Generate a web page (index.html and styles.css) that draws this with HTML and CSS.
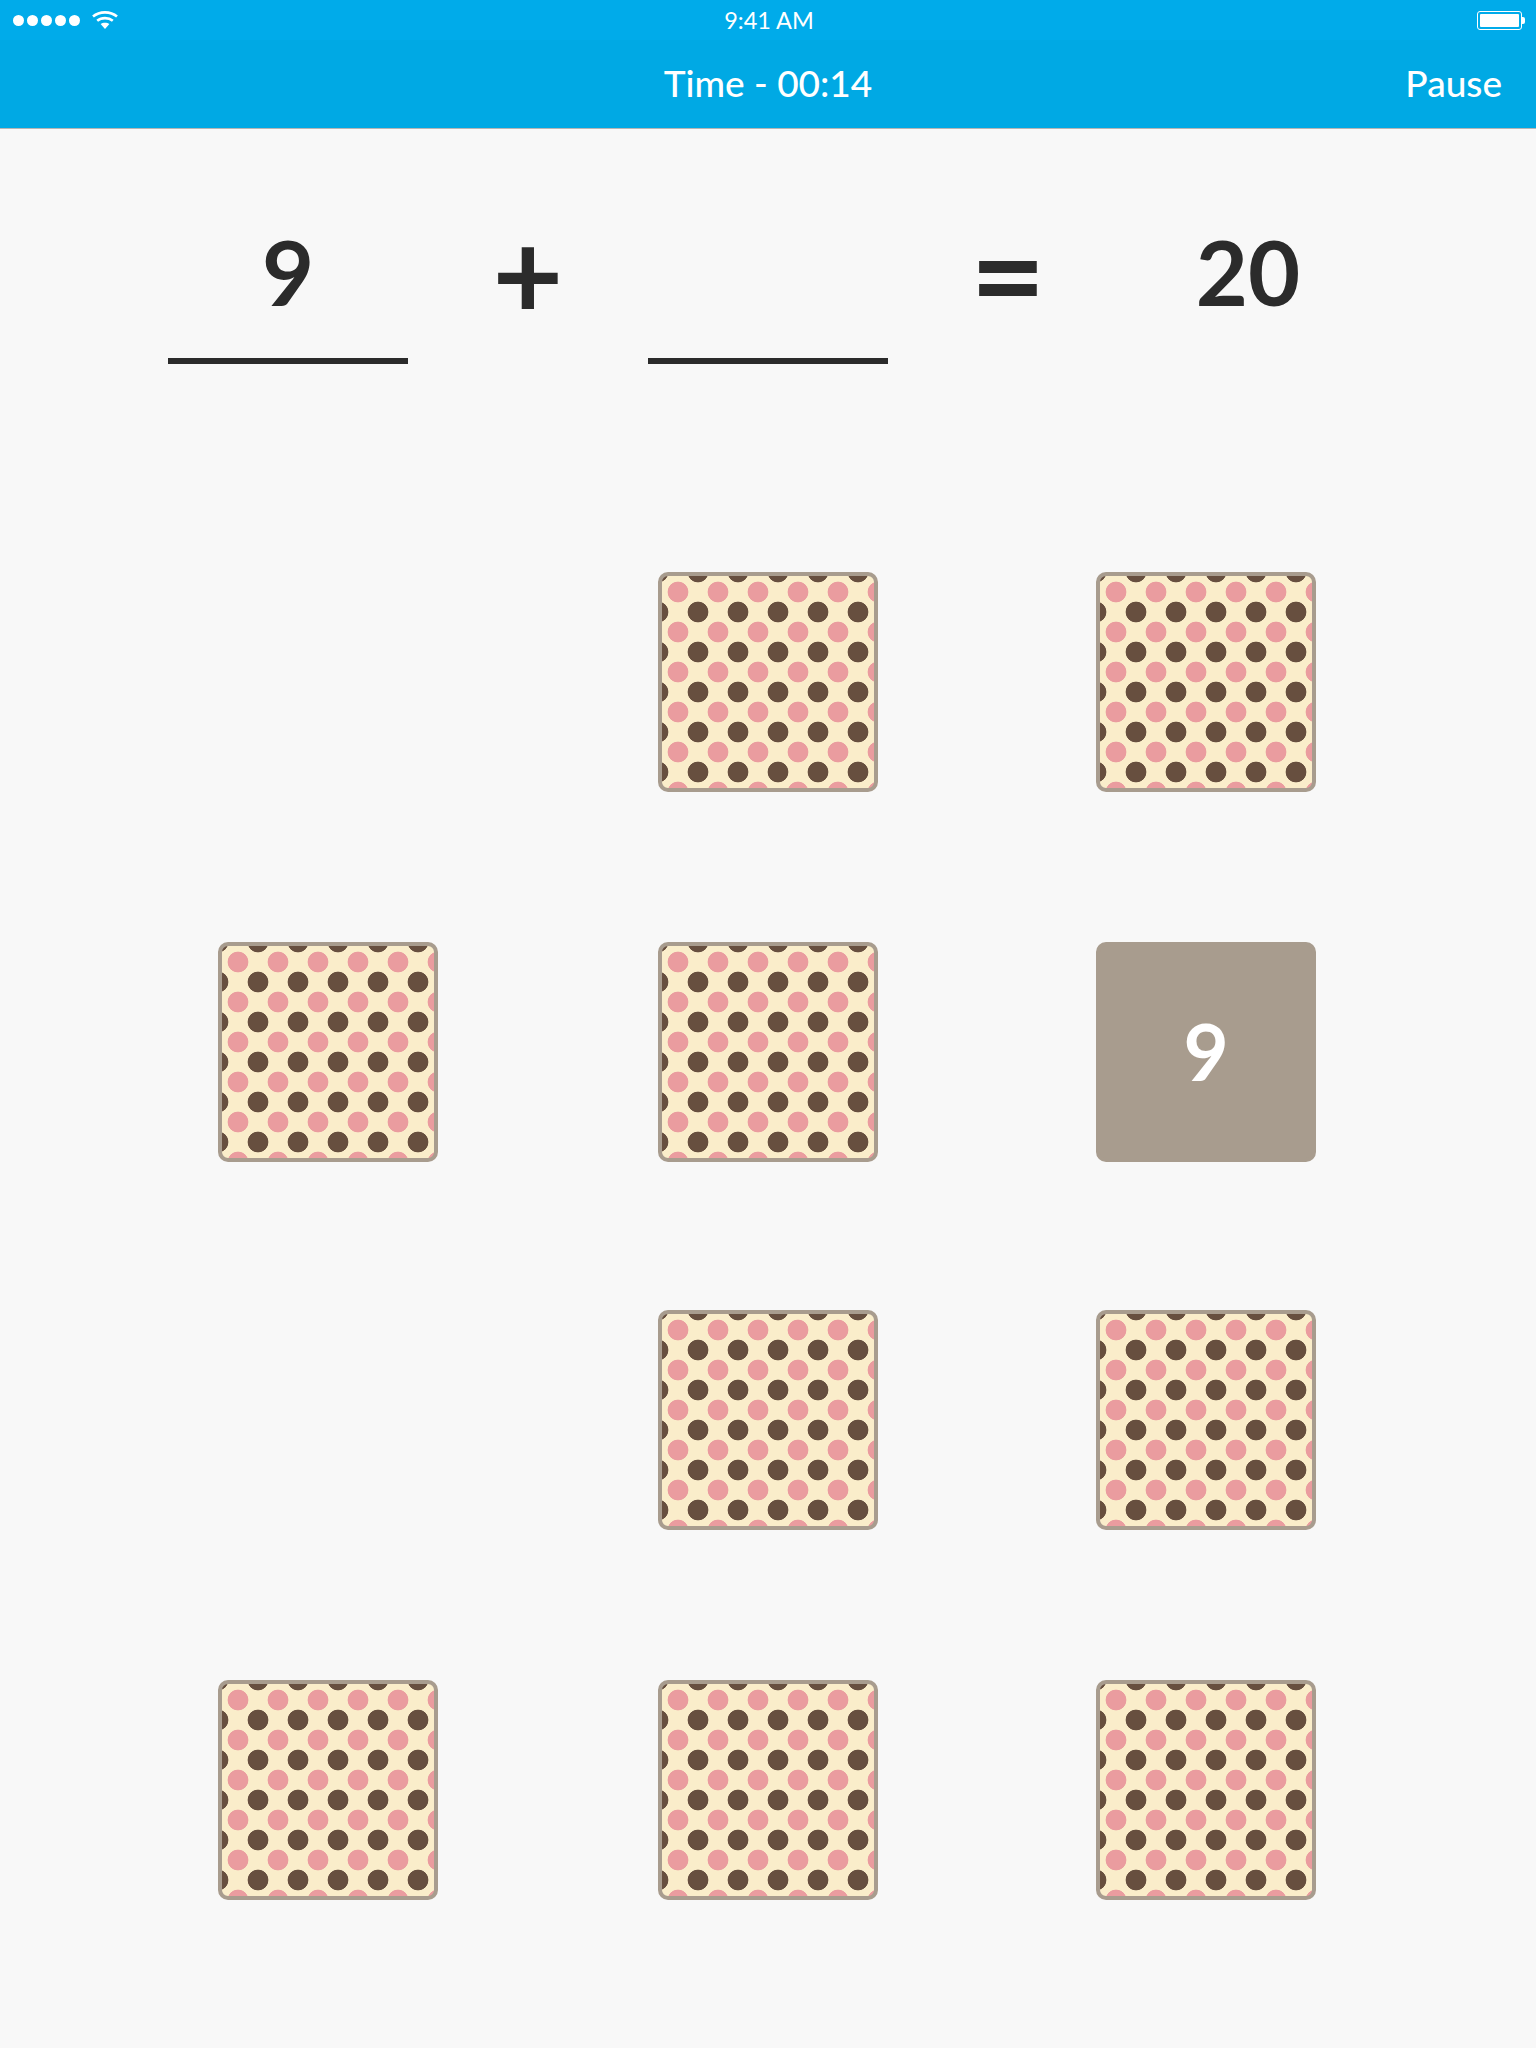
FILE: index.html
```html
<!DOCTYPE html>
<html lang="en">
<head>
    <meta charset="UTF-8">
    <title>Memory Math</title>
    <link rel="stylesheet" href="styles.css">
</head>
<body>
    <div class="status-bar">
        <div class="status-left">
            <div class="signal">
                <span class="dot"></span>
                <span class="dot"></span>
                <span class="dot"></span>
                <span class="dot"></span>
                <span class="dot"></span>
            </div>
            <svg class="wifi" width="26" height="20" viewBox="0 0 26 20">
                <path d="M1 6.6 C7.5 1 18.5 1 25 6.6" fill="none" stroke="#fff" stroke-width="2.6"/>
                <path d="M5.2 10.8 C9.5 7.2 16.5 7.2 20.8 10.8" fill="none" stroke="#fff" stroke-width="2.6"/>
                <path d="M8.6 14 C11 12.2 15 12.2 17.4 14 L13 19 Z" fill="#fff"/>
            </svg>
        </div>
        <div class="clock">9:41 AM</div>
        <div class="battery">
            <div class="battery-body"><div class="battery-fill"></div></div>
            <div class="battery-nub"></div>
        </div>
    </div>
    <div class="nav-bar">
        <div class="nav-title">Time - 00:14</div>
        <div class="nav-action">Pause</div>
    </div>

    <div class="equation">
        <div class="slot">9</div>
        <div class="operator plus">+</div>
        <div class="slot"></div>
        <div class="operator equals">=</div>
        <div class="result">20</div>
    </div>

    <div class="cards">
        <div class="card empty"></div>
        <div class="card"></div>
        <div class="card"></div>

        <div class="card"></div>
        <div class="card"></div>
        <div class="card open">9</div>

        <div class="card empty"></div>
        <div class="card"></div>
        <div class="card"></div>

        <div class="card"></div>
        <div class="card"></div>
        <div class="card"></div>
    </div>
</body>
</html>
```

FILE: styles.css
```css
body {
    margin: 0;
    height: 2048px;
    overflow: hidden;
    background-color: #f8f8f8;
    font-family: Lato, "Open Sans", sans-serif;
    color: #2b2b2b;
}
.status-bar {
    height: 40px;
    padding: 0 11px 0 13px;
    display: grid;
    grid-template-columns: 1fr auto 1fr;
    align-items: center;
    background-color: #00abea;
    color: #fff;
}
.status-left {
    display: flex;
    align-items: center;
    gap: 12px;
}
.signal {
    display: flex;
    gap: 3px;
}
.dot {
    width: 11px;
    height: 11px;
    border-radius: 50%;
    background-color: #fff;
}
.clock {
    font-size: 23.5px;
}
.battery {
    justify-self: end;
    display: flex;
    align-items: center;
}
.battery-body {
    box-sizing: border-box;
    width: 45px;
    height: 19px;
    padding: 2px;
    border: 1px solid #fff;
    border-radius: 3px;
}
.battery-fill {
    height: 100%;
    border-radius: 1px;
    background-color: #fff;
}
.battery-nub {
    width: 3px;
    height: 7px;
    border-radius: 0 2px 2px 0;
    background-color: #fff;
}
.nav-bar {
    height: 89px;
    padding: 0 34px 4px;
    box-sizing: border-box;
    display: flex;
    justify-content: center;
    align-items: center;
    position: relative;
    background-color: #00a9e4;
    border-bottom: 1px solid #b5b5b5;
    color: #fff;
    font-size: 37px;
    font-weight: 500;
}
.nav-action {
    position: absolute;
    right: 34px;
}
.equation {
    display: flex;
    padding: 90px 0 0 168px;
}
.slot, .operator, .result {
    box-sizing: border-box;
    width: 240px;
    height: 145px;
    text-align: center;
    font-size: 90px;
    font-weight: 700;
    line-height: 104px;
}
.slot {
    border-bottom: 6px solid #2b2b2b;
}
.operator.plus {
    font-size: 122px;
    line-height: 106px;
}
.operator.equals {
    font-size: 130px;
    line-height: 106px;
}
.cards {
    margin-top: 208px;
    padding-left: 218px;
    display: grid;
    grid-template-columns: 440px 438px 220px;
    grid-template-rows: 370px 368px 370px 220px;
}
.card {
    box-sizing: border-box;
    width: 220px;
    height: 220px;
    border: 4px solid #a89c8e;
    border-radius: 10px;
    background-color: #faedca;
    background-image:
        radial-gradient(circle, #ea9c9f 10px, transparent 10.7px),
        radial-gradient(circle, #674f3f 10px, transparent 10.7px);
    background-size: 40px 40px;
    background-position: -4px -4px, 16px 16px;
}
.card.empty {
    visibility: hidden;
}
.card.open {
    display: flex;
    justify-content: center;
    align-items: center;
    padding-bottom: 2px;
    background-color: #a89c8e;
    background-image: none;
    color: #fff;
    font-size: 78px;
    font-weight: 700;
}
```
